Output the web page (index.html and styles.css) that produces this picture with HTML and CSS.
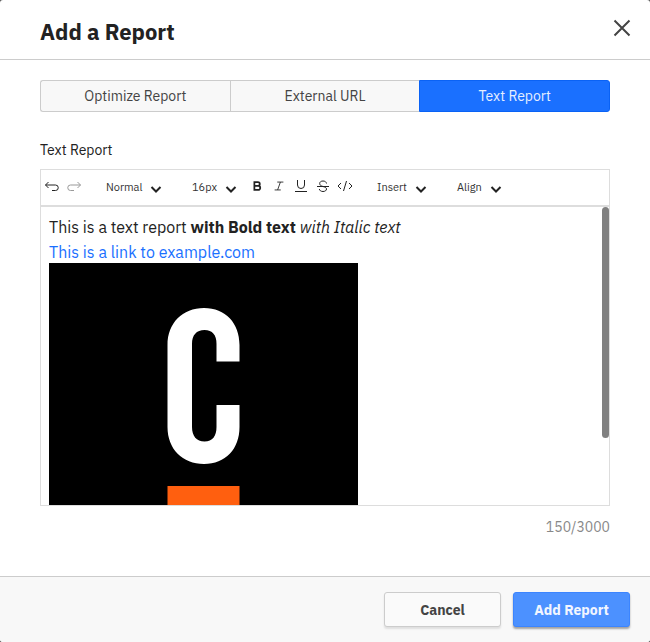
FILE: index.html
```html
<!DOCTYPE html>
<html lang="en">
<head>
<meta charset="utf-8">
<meta name="viewport" content="width=device-width, initial-scale=1">
<title>Add a Report</title>
<link rel="stylesheet" href="styles.css">
</head>
<body>
<div class="modal" role="dialog" aria-labelledby="title">
  <header class="modal-header">
    <h1 id="title">Add a Report</h1>
    <button class="close" type="button" aria-label="Close">
      <svg width="18" height="18" viewBox="0 0 18 18"><path d="M1.5 1.5l15 15M16.5 1.5l-15 15"/></svg>
    </button>
  </header>

  <main class="modal-content">
    <div class="tabs">
      <button type="button">Optimize Report</button>
      <button type="button">External URL</button>
      <button type="button" class="active">Text Report</button>
    </div>

    <div class="field-label" id="editor-label">Text Report</div>
    <div class="editor">
      <div class="toolbar">
        <button class="tool" type="button" aria-label="Undo">
          <svg viewBox="0 0 16 16"><path d="M4.500 4L1.500 7l3 3M1.500 7h10a2.700 2.700 0 0 1 0 5.500H8"/></svg>
        </button>
        <button class="tool" type="button" aria-label="Redo" disabled>
          <svg viewBox="0 0 16 16"><path d="M11.500 4l3 3-3 3M14.500 7h-10a2.700 2.700 0 0 0 0 5.500H8"/></svg>
        </button>
        <label class="dropdown wide">
          <select aria-label="Block format"><option>Normal</option><option>Heading</option></select>
          <svg viewBox="0 0 12 12"><path d="M1.500 4L6 8.500 10.500 4"/></svg>
        </label>
        <label class="dropdown">
          <select aria-label="Font size"><option>16px</option><option>18px</option></select>
          <svg viewBox="0 0 12 12"><path d="M1.500 4L6 8.500 10.500 4"/></svg>
        </label>
        <button class="tool bold" type="button" aria-label="Bold">
          <svg viewBox="0 0 16 16"><path d="M5 3.500h4a2.200 2.200 0 0 1 0 4.400H5zM5 7.900h4.400a2.300 2.300 0 0 1 0 4.600H5z"/></svg>
        </button>
        <button class="tool italic" type="button" aria-label="Italic">
          <svg viewBox="0 0 16 16"><path d="M6 3.500h7M3 12.500h7M9.600 3.500l-3.200 9"/></svg>
        </button>
        <button class="tool" type="button" aria-label="Underline">
          <svg viewBox="0 0 16 16"><path d="M4.500 2v5a3.500 3.500 0 0 0 7 0V2M2 13.500h12"/></svg>
        </button>
        <button class="tool" type="button" aria-label="Strikethrough">
          <svg viewBox="0 0 16 16"><path d="M2 8.500h12M11.500 5.500C11.300 4 10 3 8 3S4.700 4 4.700 5.500c0 1.500 1 2.300 3.300 3s3.500 1.300 3.500 2.500c0 1.500-1.500 2.500-3.500 2.500s-3.500-1-3.700-2.500"/></svg>
        </button>
        <button class="tool" type="button" aria-label="Code">
          <svg viewBox="0 0 16 16"><path d="M4 5L1 8l3 3M12 5l3 3-3 3M9.500 3l-3 10"/></svg>
        </button>
        <button class="dropdown medium" type="button" aria-haspopup="menu">
          <span>Insert</span>
          <svg viewBox="0 0 12 12"><path d="M1.500 4L6 8.500 10.500 4"/></svg>
        </button>
        <button class="dropdown" type="button" aria-haspopup="menu">
          <span>Align</span>
          <svg viewBox="0 0 12 12"><path d="M1.500 4L6 8.500 10.500 4"/></svg>
        </button>
      </div>
      <div class="text-area">
        <div class="text-content" role="textbox" aria-multiline="true" aria-labelledby="editor-label" contenteditable="true" spellcheck="false">
          <p>This is a text report <strong>with Bold text</strong> <em>with Italic text</em></p>
          <p><a href="#example">This is a link to example.com</a></p>
          <svg class="picture" viewBox="0 0 309 309" role="img" aria-label="Logo">
            <rect width="309" height="309" fill="#000"/>
            <path fill="#fff" d="M190.500 98.500h-23V81c0-9-4-14-12-14s-12.500 5-12.500 14v83c0 9 4.500 14.500 12.500 14.500s12-5.500 12-14.500v-22h23v22c0 22-14 37-35.500 37s-36.500-15-36.500-37V82c0-22 15-37 36.500-37s35.500 15 35.500 37z"/>
            <rect x="118.500" y="223" width="72" height="22" fill="#ff5f0f"/>
          </svg>
        </div>
        <span class="scroll-thumb"></span>
      </div>
    </div>
    <div class="counter">150/3000</div>
  </main>

  <footer class="modal-footer">
    <button type="button">Cancel</button>
    <button type="button" class="primary">Add Report</button>
  </footer>
</div>
</body>
</html>
```
FILE: styles.css
```css
* {
  box-sizing: border-box;
}

body {
  margin: 0;
  background: #555;
  color: #222;
  font-family: "IBM Plex Sans", Roboto, "Liberation Sans", sans-serif;
  font-size: 14px;
}

button,
select {
  margin: 0;
  padding: 0;
  border: 0;
  background: none;
  color: inherit;
  font: inherit;
}

svg {
  display: block;
  fill: none;
  stroke: currentColor;
}

.modal {
  display: flex;
  flex-direction: column;
  min-height: 100vh;
  border-radius: 3px;
  background: #fff;
  overflow: hidden;
}

.modal-header {
  display: flex;
  align-items: center;
  justify-content: space-between;
  height: 60px;
  padding: 0 19px 0 40px;
  border-bottom: 1px solid #ccc;
}

.modal-header h1 {
  margin: 4px 0 0;
  font-size: 22px;
  line-height: 28px;
  font-weight: 700;
}

.close {
  margin-bottom: 4px;
  color: #444;
}

.close svg {
  stroke-width: 2;
}

.modal-content {
  flex: 1;
  padding: 20px 40px;
}

.tabs {
  display: flex;
}

.tabs button {
  flex: 1;
  height: 32px;
  border: 1px solid #ccc;
  border-right-width: 0;
  background: #f8f8f8;
  color: #444;
}

.tabs button:first-child {
  border-radius: 3px 0 0 3px;
}

.tabs button.active {
  border: 1px solid #0a62f5;
  border-radius: 0 3px 3px 0;
  background: #1a70ff;
  color: #e6eeff;
}

.field-label {
  margin: 28px 0 9px;
  line-height: 20px;
}

.editor {
  border: 1px solid #ddd;
}

.toolbar {
  display: flex;
  align-items: center;
  height: 37px;
  padding-bottom: 2px;
  border-bottom: 2px solid #ddd;
}

.tool {
  display: flex;
  align-items: center;
  justify-content: center;
  width: 22px;
  height: 24px;
  margin-bottom: 2px;
}

.tool:disabled {
  color: #999;
}

.tool svg {
  width: 16px;
  height: 16px;
}

.bold svg {
  stroke-width: 2;
}

.bold svg,
.italic svg {
  width: 14px;
}

.dropdown {
  display: flex;
  align-items: center;
  justify-content: space-between;
  width: 62px;
  height: 24px;
  margin-left: 13px;
  padding: 0 9px 0 8px;
  color: #333;
  font-size: 11px;
}

.dropdown.medium {
  width: 67px;
}

.dropdown.wide {
  width: 73px;
}

.dropdown select {
  appearance: none;
  flex: 1;
  min-width: 0;
}

.dropdown svg {
  flex: none;
  width: 12px;
  height: 12px;
  margin-top: 4px;
  color: #222;
  stroke-width: 2;
}

.text-area {
  position: relative;
  height: 298px;
  overflow: hidden;
}

.text-content {
  padding: 8px;
  font-size: 16px;
  line-height: 25px;
}

.text-content p {
  margin: 0;
}

.text-content a {
  color: #1a70ff;
  text-decoration: none;
}

.picture {
  width: 309px;
  height: 309px;
  margin-top: -2px;
  stroke: none;
}

.scroll-thumb {
  position: absolute;
  top: 0;
  right: 0;
  width: 7px;
  height: 231px;
  border-radius: 4px;
  background: #808080;
}

.counter {
  margin-top: 11px;
  color: #888;
  line-height: 20px;
  text-align: right;
}

.modal-footer {
  display: flex;
  justify-content: flex-end;
  gap: 12px;
  padding: 15px 20px;
  border-top: 1px solid #ccc;
  background: #f8f8f8;
}

.modal-footer button {
  width: 117px;
  height: 35px;
  border: 1px solid #ccc;
  border-radius: 3px;
  background: #fafafa;
  box-shadow: 0 2px 2px rgba(0, 0, 0, 0.1);
  color: #444;
  font-weight: 700;
}

.modal-footer .primary {
  border-color: #3c85ff;
  background: #4c91ff;
  box-shadow: 0 2px 2px rgba(0, 0, 0, 0.35);
  color: #f2f6ff;
}
```
